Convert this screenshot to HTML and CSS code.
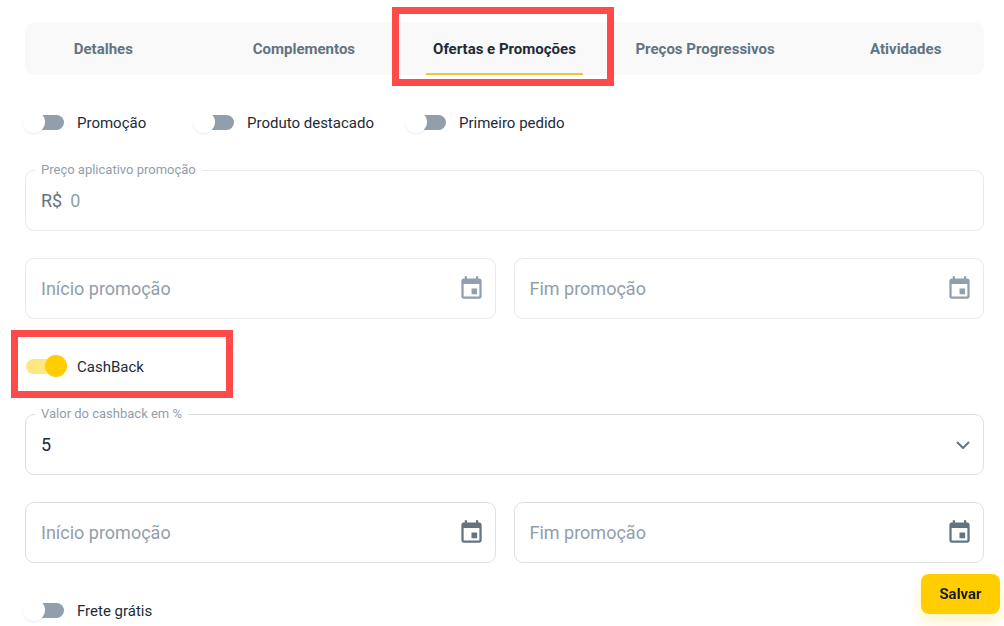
FILE: index.html
```html
<!DOCTYPE html>
<html lang="pt-BR">

<head>
    <meta charset="UTF-8">
    <meta name="viewport" content="width=device-width, initial-scale=1">
    <title>Produto - Ofertas e Promoções</title>
    <link rel="stylesheet" href="styles.css">
</head>

<body>

    <svg class="sprite" aria-hidden="true">
        <symbol id="icon-calendar" viewBox="0 0 24 24">
            <path d="M17 12h-5v5h5v-5zM16 1v2H8V1H6v2H5c-1.11 0-1.99.9-1.99 2L3 19c0 1.1.89 2 2 2h14c1.1 0 2-.9 2-2V5c0-1.1-.9-2-2-2h-1V1h-2zm3 18H5V8h14v11z" />
        </symbol>
    </svg>

    <nav class="tabs">
        <button type="button" class="tab">Detalhes</button>
        <button type="button" class="tab">Complementos</button>
        <button type="button" class="tab active">Ofertas e Promoções</button>
        <button type="button" class="tab">Preços Progressivos</button>
        <button type="button" class="tab">Atividades</button>
    </nav>

    <form id="offersForm">
        <div class="switches">
            <label class="switch"><input type="checkbox" id="promo">Promoção</label>
            <label class="switch"><input type="checkbox" id="featured">Produto destacado</label>
            <label class="switch"><input type="checkbox" id="firstOrder">Primeiro pedido</label>
        </div>

        <div class="field disabled">
            <label for="promoPrice">Preço aplicativo promoção</label>
            <span class="prefix">R$</span>
            <input type="text" id="promoPrice" placeholder="0" disabled>
        </div>

        <div class="dates">
            <div class="field disabled">
                <input type="text" placeholder="Início promoção" aria-label="Início promoção" disabled>
                <button type="button" class="icon-button" aria-label="Escolher data de início" disabled>
                    <svg><use href="#icon-calendar" /></svg>
                </button>
            </div>
            <div class="field disabled">
                <input type="text" placeholder="Fim promoção" aria-label="Fim promoção" disabled>
                <button type="button" class="icon-button" aria-label="Escolher data de fim" disabled>
                    <svg><use href="#icon-calendar" /></svg>
                </button>
            </div>
        </div>

        <div class="switches">
            <label class="switch highlight"><input type="checkbox" id="cashback" checked>CashBack</label>
        </div>

        <div class="field">
            <label for="cashbackValue">Valor do cashback em %</label>
            <select id="cashbackValue">
                <option>5</option>
                <option>10</option>
                <option>15</option>
            </select>
            <svg class="chevron" viewBox="0 0 14 8" aria-hidden="true">
                <path d="M1 1l6 6 6-6" />
            </svg>
        </div>

        <div class="dates">
            <div class="field">
                <input type="text" placeholder="Início promoção" aria-label="Início do cashback">
                <button type="button" class="icon-button" aria-label="Escolher início do cashback">
                    <svg><use href="#icon-calendar" /></svg>
                </button>
            </div>
            <div class="field">
                <input type="text" placeholder="Fim promoção" aria-label="Fim do cashback">
                <button type="button" class="icon-button" aria-label="Escolher fim do cashback">
                    <svg><use href="#icon-calendar" /></svg>
                </button>
            </div>
        </div>

        <div class="switches last">
            <label class="switch"><input type="checkbox" id="freeShipping">Frete grátis</label>
        </div>

        <button type="submit" class="save">Salvar</button>
    </form>

</body>

</html>
```
FILE: styles.css
```css
*,
*::before,
*::after {
    box-sizing: border-box;
}

body {
    margin: 0;
    padding: 22px 20px 0 25px;
    font-family: Roboto, sans-serif;
    color: #212b36;
    background: #fff;
}

input,
select,
button {
    font-family: inherit;
}

.sprite {
    display: none;
}

/* tabs */
.tabs {
    display: grid;
    grid-template-columns: repeat(5, 1fr);
    column-gap: 44px;
    background: #f9f9f9;
    border-radius: 10px;
}

.tab {
    position: relative;
    height: 53px;
    padding: 0;
    border: none;
    background: none;
    color: #637381;
    font-size: 15px;
    font-weight: 700;
    white-space: nowrap;
    cursor: pointer;
}

.tab.active {
    color: #212b36;
    box-shadow: inset 0 -2px #e8c93c;
}

/* red callouts */
.tab.active::after,
.highlight::after {
    content: "";
    position: absolute;
    border: 7px solid #ff4a4a;
    pointer-events: none;
}

.tab.active::after {
    inset: -15px -31px -11px -34px;
}

.highlight::after {
    width: 222px;
    height: 68px;
    left: -14px;
    top: -28px;
}

/* switches */
.switches {
    display: flex;
    align-items: center;
    gap: 33px;
    height: 95px;
}

.switches.last {
    height: 63px;
    padding-top: 32px;
}

.switch {
    position: relative;
    display: flex;
    align-items: center;
    gap: 13px;
    font-size: 15px;
    cursor: pointer;
}

.switch:first-child {
    min-width: 137px;
}

.switch input {
    position: relative;
    appearance: none;
    width: 38px;
    height: 15px;
    margin: 0 0 0 1px;
    border-radius: 8px;
    background: #919eab;
    cursor: pointer;
}

.switch input::before {
    content: "";
    position: absolute;
    left: -3px;
    top: -4px;
    width: 22px;
    height: 22px;
    border-radius: 50%;
    background: #fff;
    box-shadow: 0 1px 2px rgba(145, 158, 171, 0.2);
}

.switch input:checked {
    background: #ffe77f;
}

.switch input:checked::before {
    left: 19px;
    background: #ffcd00;
    box-shadow: none;
}

/* fields */
.field {
    position: relative;
    display: flex;
    align-items: center;
    height: 61px;
    padding: 0 15px;
    border: 1px solid #dce0e4;
    border-radius: 9px;
}

.field.disabled {
    border-color: #e8e9eb;
}

.field label {
    position: absolute;
    top: -9px;
    left: 9px;
    padding: 0 6px;
    background: #fff;
    color: #919eab;
    font-size: 13px;
    line-height: 16px;
}

.field input,
.field select {
    flex: 1;
    min-width: 0;
    height: 100%;
    padding: 0;
    border: none;
    outline: none;
    background: none;
    appearance: none;
    color: #212b36;
    font-size: 18px;
}

.field input::placeholder {
    color: #919eab;
}

.field:focus-within {
    border-color: #ffcd00;
}

.prefix {
    margin-right: 8px;
    color: #637381;
    font-size: 18px;
}

.dates {
    display: grid;
    grid-template-columns: 1fr 1fr;
    gap: 18px;
    margin-top: 27px;
}

.icon-button {
    display: flex;
    padding: 0;
    margin-right: -5px;
    border: none;
    background: none;
    color: #637381;
    cursor: pointer;
}

.icon-button svg {
    width: 27px;
    height: 27px;
    fill: currentColor;
}

.icon-button:disabled {
    color: #919eab;
    cursor: default;
}

.chevron {
    position: absolute;
    right: 13px;
    width: 14px;
    height: 8px;
    fill: none;
    stroke: #637381;
    stroke-width: 2;
    pointer-events: none;
}

.save {
    position: fixed;
    right: 4px;
    bottom: 12px;
    width: 79px;
    height: 40px;
    padding: 0;
    border: none;
    border-radius: 8px;
    background: #ffcd00;
    color: #161c24;
    font-size: 15px;
    font-weight: 700;
    box-shadow: 0 8px 16px rgba(255, 205, 0, 0.24);
    cursor: pointer;
}
```
